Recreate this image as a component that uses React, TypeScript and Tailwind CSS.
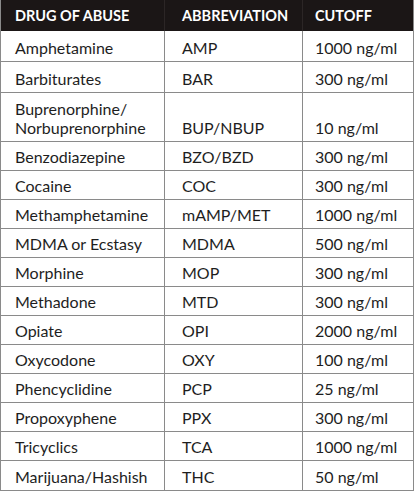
import React from "react";

type Row = { drug: React.ReactNode; abbr: string; cut: string; h: string };

const rows: Row[] = [
  { drug: "Amphetamine", abbr: "AMP", cut: "1000 ng/ml", h: "h-[31px]" },
  { drug: "Barbiturates", abbr: "BAR", cut: "300 ng/ml", h: "h-[31px]" },
  {
    drug: (
      <>
        Buprenorphine/
        <br />
        Norbuprenorphine
      </>
    ),
    abbr: "BUP/NBUP",
    cut: "10 ng/ml",
    h: "h-[49px]",
  },
  { drug: "Benzodiazepine", abbr: "BZO/BZD", cut: "300 ng/ml", h: "h-[29px]" },
  { drug: "Cocaine", abbr: "COC", cut: "300 ng/ml", h: "h-[29px]" },
  { drug: "Methamphetamine", abbr: "mAMP/MET", cut: "1000 ng/ml", h: "h-[29px]" },
  { drug: "MDMA or Ecstasy", abbr: "MDMA", cut: "500 ng/ml", h: "h-[29px]" },
  { drug: "Morphine", abbr: "MOP", cut: "300 ng/ml", h: "h-[29px]" },
  { drug: "Methadone", abbr: "MTD", cut: "300 ng/ml", h: "h-[29px]" },
  { drug: "Opiate", abbr: "OPI", cut: "2000 ng/ml", h: "h-[29px]" },
  { drug: "Oxycodone", abbr: "OXY", cut: "100 ng/ml", h: "h-[29px]" },
  { drug: "Phencyclidine", abbr: "PCP", cut: "25 ng/ml", h: "h-[29px]" },
  { drug: "Propoxyphene", abbr: "PPX", cut: "300 ng/ml", h: "h-[29px]" },
  { drug: "Tricyclics", abbr: "TCA", cut: "1000 ng/ml", h: "h-[29px]" },
  { drug: "Marijuana/Hashish", abbr: "THC", cut: "50 ng/ml", h: "h-[30px]" },
];

export default function App() {
  return (
    <div
      className="w-[416px] h-[491px] overflow-hidden bg-white"
      style={{ fontFamily: "Lato, 'Open Sans', sans-serif" }}
    >
      <div className="w-[414px] border-l border-r border-[#8a8a8a]">
        <div className="grid grid-cols-[164px_138px_1fr] h-[31px] bg-[#1b1616] text-white font-bold text-[14.5px] leading-[18px]">
          <div className="flex items-center pl-[14px] border-r border-[#2c2626]">DRUG OF ABUSE</div>
          <div className="flex items-center pl-[17px] border-r border-[#2c2626]">ABBREVIATION</div>
          <div className="flex items-center pl-[12px]">CUTOFF</div>
        </div>
        {rows.map((r, i) => (
          <div
            key={i}
            className={`grid grid-cols-[164px_138px_1fr] ${r.h} border-b border-[#8a8a8a] text-[#1e1e1e] text-[16px] leading-[19px]`}
          >
            <div className="flex items-end pb-[4px] pl-[14px] border-r border-[#8a8a8a]">
              <span>{r.drug}</span>
            </div>
            <div className="flex items-end pb-[4px] pl-[17px] border-r border-[#8a8a8a]">{r.abbr}</div>
            <div className="flex items-end pb-[4px] pl-[12px]">{r.cut}</div>
          </div>
        ))}
      </div>
    </div>
  );
}
